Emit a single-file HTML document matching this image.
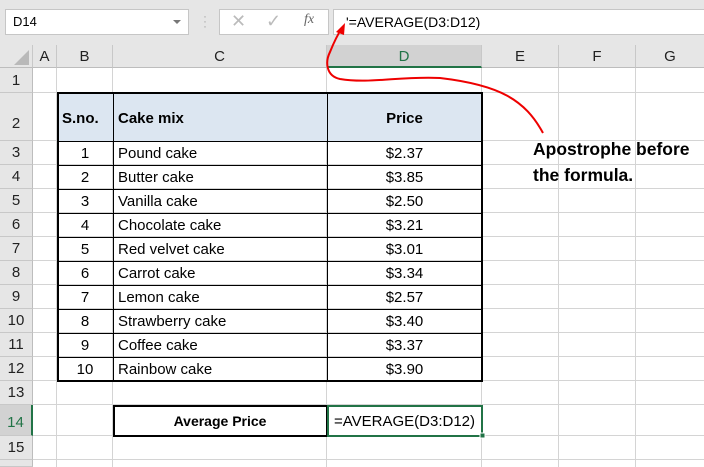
<!DOCTYPE html>
<html><head><meta charset="utf-8"><style>
*{margin:0;padding:0;box-sizing:border-box}
body{width:704px;height:467px;overflow:hidden;background:#fff;font-family:"Liberation Sans",sans-serif;position:relative}
.a{position:absolute}
.top{left:0;top:0;width:704px;height:45px;background:#e6e6e6}
.box{background:#fff;border:1px solid #c6c6c6}
.ch{background:#e6e6e6;border-right:1px solid #c8c8c8;border-bottom:1px solid #bdbdbd;text-align:center;font-size:15px;line-height:23px;color:#222}
.rh{background:#e6e6e6;border-bottom:1px solid #c8c8c8;border-right:1px solid #bdbdbd;text-align:center;font-size:15px;color:#222;width:33px;left:0}
.vl{top:68px;width:1px;height:399px;background:#d4d4d4}
.hl{left:33px;width:671px;height:1px;background:#d4d4d4}
.c{font-size:15px;color:#000;display:flex;align-items:center}
</style></head><body>
<div class="a top"></div>
<div class="a box" style="left:5px;top:9px;width:184px;height:26px;font-size:13px;line-height:24px;padding-left:7px">D14</div>
<div class="a" style="left:173px;top:20px;width:0;height:0;border-left:4px solid transparent;border-right:4px solid transparent;border-top:4px solid #777"></div>
<div class="a" style="left:203px;top:14px;color:#aaa;font-size:12px;line-height:5px">·<br>·<br>·</div>
<div class="a box" style="left:219px;top:9px;width:110px;height:26px"></div>
<div class="a" style="left:231px;top:11px;color:#bbb;font-size:18px">✕</div>
<div class="a" style="left:266px;top:11px;color:#bbb;font-size:18px">✓</div>
<div class="a" style="left:304px;top:12px;color:#666;font-size:14px;font-style:italic;font-family:'Liberation Serif',serif">fx</div>
<div class="a box" style="left:333px;top:9px;width:371px;height:26px;font-size:14px;line-height:24px;padding-left:12px;border-right:none">'=AVERAGE(D3:D12)</div>

<div class="a" style="left:0;top:45px;width:33px;height:23px;background:#e6e6e6;border-right:1px solid #c8c8c8;border-bottom:1px solid #bdbdbd"></div>
<div class="a" style="left:14px;top:50px;width:0;height:0;border-left:15px solid transparent;border-bottom:15px solid #b9b9b9"></div>
<div class="a ch" style="left:33px;top:45px;width:24px;height:23px">A</div>
<div class="a ch" style="left:57px;top:45px;width:56px;height:23px">B</div>
<div class="a ch" style="left:113px;top:45px;width:214px;height:23px">C</div>
<div class="a ch" style="left:327px;top:45px;width:155px;height:23px;background:#d2d2d2;color:#217346;border-bottom:2px solid #217346">D</div>
<div class="a ch" style="left:482px;top:45px;width:77px;height:23px">E</div>
<div class="a ch" style="left:559px;top:45px;width:77px;height:23px">F</div>
<div class="a ch" style="left:636px;top:45px;width:68px;height:23px;border-right:none">G</div>

<div class="a rh" style="top:68px;height:25px;line-height:25px">1</div>
<div class="a rh" style="top:93px;height:48px;line-height:62px">2</div>
<div class="a rh" style="top:141px;height:24px;line-height:24px">3</div>
<div class="a rh" style="top:165px;height:24px;line-height:24px">4</div>
<div class="a rh" style="top:189px;height:24px;line-height:24px">5</div>
<div class="a rh" style="top:213px;height:24px;line-height:24px">6</div>
<div class="a rh" style="top:237px;height:24px;line-height:24px">7</div>
<div class="a rh" style="top:261px;height:24px;line-height:24px">8</div>
<div class="a rh" style="top:285px;height:24px;line-height:24px">9</div>
<div class="a rh" style="top:309px;height:24px;line-height:24px">10</div>
<div class="a rh" style="top:333px;height:24px;line-height:24px">11</div>
<div class="a rh" style="top:357px;height:24px;line-height:24px">12</div>
<div class="a rh" style="top:381px;height:24px;line-height:24px">13</div>
<div class="a rh" style="top:405px;height:31px;line-height:36px;background:#d2d2d2;color:#217346;border-right:2px solid #217346">14</div>
<div class="a rh" style="top:436px;height:24px;line-height:24px">15</div>
<div class="a rh" style="top:460px;height:7px"></div>

<div class="a vl" style="left:56px"></div>
<div class="a vl" style="left:112px"></div>
<div class="a vl" style="left:326px"></div>
<div class="a vl" style="left:481px"></div>
<div class="a vl" style="left:558px"></div>
<div class="a vl" style="left:635px"></div>
<div class="a hl" style="top:92px"></div>
<div class="a hl" style="top:140px"></div>
<div class="a hl" style="top:164px"></div>
<div class="a hl" style="top:188px"></div>
<div class="a hl" style="top:212px"></div>
<div class="a hl" style="top:236px"></div>
<div class="a hl" style="top:260px"></div>
<div class="a hl" style="top:284px"></div>
<div class="a hl" style="top:308px"></div>
<div class="a hl" style="top:332px"></div>
<div class="a hl" style="top:356px"></div>
<div class="a hl" style="top:380px"></div>
<div class="a hl" style="top:404px"></div>
<div class="a hl" style="top:435px"></div>
<div class="a hl" style="top:459px"></div>

<div class="a" style="left:57px;top:93px;width:425px;height:48px;background:#dce6f1"></div>
<svg class="a" style="left:0;top:0" width="704" height="467">
<g stroke="#000" stroke-width="1" shape-rendering="crispEdges">
<line x1="113.5" y1="93" x2="113.5" y2="381"/>
<line x1="327.5" y1="93" x2="327.5" y2="381"/>
<line x1="57" y1="141.5" x2="482" y2="141.5"/>
<line x1="57" y1="165.5" x2="482" y2="165.5"/>
<line x1="57" y1="189.5" x2="482" y2="189.5"/>
<line x1="57" y1="213.5" x2="482" y2="213.5"/>
<line x1="57" y1="237.5" x2="482" y2="237.5"/>
<line x1="57" y1="261.5" x2="482" y2="261.5"/>
<line x1="57" y1="285.5" x2="482" y2="285.5"/>
<line x1="57" y1="309.5" x2="482" y2="309.5"/>
<line x1="57" y1="333.5" x2="482" y2="333.5"/>
<line x1="57" y1="357.5" x2="482" y2="357.5"/>
</g>
<rect x="58" y="93" width="424" height="288" fill="none" stroke="#000" stroke-width="2"/>
<rect x="114" y="406" width="213" height="30" fill="#fff" stroke="#000" stroke-width="2"/>
<rect x="328" y="406" width="154" height="30" fill="#fff" stroke="#217346" stroke-width="2"/>
<rect x="480" y="433" width="5" height="5" fill="#217346" stroke="#fff" stroke-width="1"/>
<path d="M543,133 C525,100 500,85 440,78 C400,76 370,84 340,79 C326,76 325,62 330,52 C334,42 338,34 342,28" fill="none" stroke="#e00" stroke-width="2"/>
<path d="M345,23 L336,32 L344,35 Z" fill="#e00"/>
</svg>

<div class="a c" style="left:57px;top:93px;width:56px;height:48px;padding:2px 0 0 5px;font-weight:bold">S.no.</div>
<div class="a c" style="left:113px;top:93px;width:214px;height:48px;padding:2px 0 0 5px;font-weight:bold">Cake mix</div>
<div class="a c" style="left:327px;top:93px;width:155px;height:48px;padding-top:2px;justify-content:center;font-weight:bold">Price</div>

<div class="a" style="left:57px;top:142px;width:425px;font-size:15px;line-height:24px">
<div style="display:flex"><span style="width:56px;text-align:center">1</span><span style="width:214px;padding-left:5px">Pound cake</span><span style="width:155px;text-align:center">$2.37</span></div>
<div style="display:flex"><span style="width:56px;text-align:center">2</span><span style="width:214px;padding-left:5px">Butter cake</span><span style="width:155px;text-align:center">$3.85</span></div>
<div style="display:flex"><span style="width:56px;text-align:center">3</span><span style="width:214px;padding-left:5px">Vanilla cake</span><span style="width:155px;text-align:center">$2.50</span></div>
<div style="display:flex"><span style="width:56px;text-align:center">4</span><span style="width:214px;padding-left:5px">Chocolate cake</span><span style="width:155px;text-align:center">$3.21</span></div>
<div style="display:flex"><span style="width:56px;text-align:center">5</span><span style="width:214px;padding-left:5px">Red velvet cake</span><span style="width:155px;text-align:center">$3.01</span></div>
<div style="display:flex"><span style="width:56px;text-align:center">6</span><span style="width:214px;padding-left:5px">Carrot cake</span><span style="width:155px;text-align:center">$3.34</span></div>
<div style="display:flex"><span style="width:56px;text-align:center">7</span><span style="width:214px;padding-left:5px">Lemon cake</span><span style="width:155px;text-align:center">$2.57</span></div>
<div style="display:flex"><span style="width:56px;text-align:center">8</span><span style="width:214px;padding-left:5px">Strawberry cake</span><span style="width:155px;text-align:center">$3.40</span></div>
<div style="display:flex"><span style="width:56px;text-align:center">9</span><span style="width:214px;padding-left:5px">Coffee cake</span><span style="width:155px;text-align:center">$3.37</span></div>
<div style="display:flex"><span style="width:56px;text-align:center">10</span><span style="width:214px;padding-left:5px">Rainbow cake</span><span style="width:155px;text-align:center">$3.90</span></div>
</div>

<div class="a" style="left:113px;top:405px;width:214px;height:31px;line-height:33px;text-align:center;font-size:14px;font-weight:bold">Average Price</div>
<div class="a" style="left:327px;top:405px;width:155px;height:31px;line-height:33px;text-align:center;font-size:15px">=AVERAGE(D3:D12)</div>

<div class="a" style="left:533px;top:136px;font-size:17.5px;font-weight:bold;line-height:26px;white-space:nowrap">Apostrophe before<br>the formula.</div>
</body></html>
